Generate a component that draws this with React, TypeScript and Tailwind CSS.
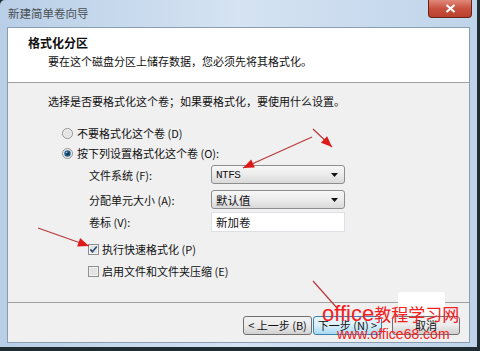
import React from 'react';

// 新建简单卷向导 - 格式化分区 页面

const Radio = ({ checked = false }: { checked?: boolean }) => (
  <svg width="11" height="11" viewBox="0 0 11 11" className="shrink-0">
    <circle cx="5.5" cy="5.5" r="5" fill="#f3f3f3" stroke="#8e8f8f" />
    <circle cx="5.5" cy="5.5" r="3.6" fill="#e4e4e4" />
    {checked && (
      <>
        <circle cx="5.5" cy="5.5" r="3.2" fill="#1f5d8c" />
        <circle cx="5.5" cy="5.5" r="1.6" fill="#0e2f4a" />
        <circle cx="4.6" cy="4.4" r="0.9" fill="#8fc3e8" />
      </>
    )}
  </svg>
);

const Check = ({ checked = false }: { checked?: boolean }) => (
  <svg width="11" height="11" viewBox="0 0 11 11" className="shrink-0">
    <rect x="0.5" y="0.5" width="10" height="10" fill="#f2f2f2" stroke="#8e8f8f" />
    <rect x="2" y="2" width="7" height="7" fill="#e3e3e3" />
    {checked && <path d="M2.3 5.4 L4.4 7.8 L8.8 2.6" fill="none" stroke="#2a4a78" strokeWidth="1.6" />}
  </svg>
);

const Combo = ({ value, mono }: { value: string; mono?: boolean }) => (
  <div className="w-[134px] h-[19px] flex items-center justify-between rounded-[3px] border border-[#8d8d8d] bg-gradient-to-b from-[#f7f7f7] via-[#ececec] to-[#d9d9d9] pl-[4px] pr-[6px]">
    <span className={mono ? "font-['Liberation_Mono',monospace] text-[11px] tracking-[-0.5px]" : 'text-[11.5px]'}>{value}</span>
    <svg width="7" height="4" viewBox="0 0 7 4">
      <path d="M0 0h7L3.5 4z" fill="#111" />
    </svg>
  </div>
);

const Btn = ({ label, primary, w }: { label: string; primary?: boolean; w: string }) => (
  <div
    className={`${w} h-[19px] flex items-center justify-center rounded-[3px] border text-[11px] ${
      primary
        ? 'border-[#3c7fb1] bg-gradient-to-b from-[#eaf6fd] via-[#d9f0fc] to-[#a7d9f5]'
        : 'border-[#707070] bg-gradient-to-b from-[#f2f2f2] via-[#ebebeb] to-[#d0d0d0]'
    }`}
  >
    {label}
  </div>
);

const head = (x1: number, y1: number, x2: number, y2: number, len = 11, w = 4.5) => {
  const dx = x2 - x1;
  const dy = y2 - y1;
  const d = Math.hypot(dx, dy);
  const ux = dx / d;
  const uy = dy / d;
  const bx = x2 - ux * len;
  const by = y2 - uy * len;
  return `${x2},${y2} ${bx - uy * w},${by + ux * w} ${bx + uy * w},${by - ux * w}`;
};

const arrows = [
  [313, 129, 332, 147, true],
  [312, 137, 243, 168, true],
  [38, 228, 89, 246, true],
  [313, 281, 337, 308, false],
] as const;

export default function App() {
  return (
    <div className="relative w-[480px] h-[351px] overflow-hidden bg-[#1f2c32] font-['Noto_Sans_CJK_SC',sans-serif] text-[#111]">
      {/* 窗口 */}
      <div className="w-[477px] h-[347px] flex flex-col rounded-tl-[5px] bg-gradient-to-r from-[#b9cfe7] via-[#d5e3f2] to-[#bfd4ea] px-[7px] pb-[4px]">
        {/* 标题栏 */}
        <div className="h-[27px] flex items-start justify-between shrink-0">
          <span className="mt-[6px] ml-[1px] text-[11.5px] leading-[15px] text-[#4a4f55]">新建简单卷向导</span>
          <div className="mr-[-2px] w-[44px] h-[18px] flex items-center justify-center rounded-b-[4px] border border-t-0 border-[#6b2219] bg-gradient-to-b from-[#e0897b] via-[#c9513f] to-[#b8402d]">
            <svg width="11" height="9" viewBox="0 0 11 9">
              <path d="M1.5 1 L9.5 8 M9.5 1 L1.5 8" stroke="#fff" strokeWidth="2.2" />
            </svg>
          </div>
        </div>

        {/* 客户区 */}
        <div className="flex-1 flex flex-col border border-[#8b9db2] bg-[#f0f0f0]">
          {/* 页眉 */}
          <div className="h-[55px] shrink-0 bg-white border-b border-[#a0a0a0] pl-[20px] pt-[8px]">
            <div className="text-[12px] leading-[14px] font-bold">格式化分区</div>
            <div className="mt-[4px] ml-[20px] text-[11px] leading-[14px]">要在这个磁盘分区上储存数据，您必须先将其格式化。</div>
          </div>

          {/* 主体 */}
          <div className="flex-1 flex flex-col pl-[40px] pt-[11px] text-[11px] leading-[14px]">
            <div>选择是否要格式化这个卷；如果要格式化，要使用什么设置。</div>

            <div className="mt-[18px] ml-[14px] flex items-center gap-[4px]">
              <Radio />
              <span>不要格式化这个卷 (D)</span>
            </div>
            <div className="mt-[6px] ml-[14px] flex items-center gap-[4px]">
              <Radio checked />
              <span>按下列设置格式化这个卷 (O):</span>
            </div>

            <div className="mt-[5px] ml-[41px] flex items-center">
              <span className="w-[122px]">文件系统 (F):</span>
              <Combo value="NTFS" mono />
            </div>
            <div className="mt-[6px] ml-[41px] flex items-center">
              <span className="w-[122px]">分配单元大小 (A):</span>
              <Combo value="默认值" />
            </div>
            <div className="mt-[3px] ml-[41px] flex items-center">
              <span className="w-[122px]">卷标 (V):</span>
              <div className="w-[134px] h-[20px] flex items-center bg-white border border-[#dcdfe4] pl-[4px] text-[11.5px]">新加卷</div>
            </div>

            <div className="mt-[10px] ml-[40px] flex items-center gap-[3px]">
              <Check checked />
              <span>执行快速格式化 (P)</span>
            </div>
            <div className="mt-[8px] ml-[40px] flex items-center gap-[3px]">
              <Check />
              <span>启用文件和文件夹压缩 (E)</span>
            </div>
          </div>

          {/* 按钮 */}
          <div className="h-[40px] shrink-0 border-t border-[#a0a0a0] flex justify-end items-start pt-[13px] pr-[9px]">
            <Btn label="< 上一步 (B)" w="w-[69px]" />
            <div className="ml-[1px]">
              <Btn label="下一步 (N) >" w="w-[69px]" primary />
            </div>
            <div className="ml-[10px]">
              <Btn label="取消" w="w-[68px]" />
            </div>
          </div>
        </div>
      </div>

      {/* 标注箭头 */}
      <svg className="absolute left-0 top-0 pointer-events-none" width="480" height="351">
        {arrows.map(([x1, y1, x2, y2, h], i) => (
          <g key={i}>
            <line x1={x1} y1={y1} x2={x2} y2={y2} stroke="#b8393b" strokeWidth="1.2" />
            {h && <polygon points={head(x1, y1, x2, y2)} fill="#dd1a1a" />}
          </g>
        ))}
      </svg>

      {/* 水印 */}
      <div className="absolute left-[398px] top-[292px] w-[47px] h-[23px] rounded-[3px] bg-white" />
      <div className="absolute left-[322px] top-[302px] flex items-baseline text-[#f5201e] leading-[24px]">
        <span className="font-['Liberation_Sans',sans-serif] text-[22px]">office</span>
        <span className="text-[17px]">教程学习网</span>
      </div>
      <div className="absolute left-[337px] top-[326px] font-['Liberation_Sans',sans-serif] text-[14px] leading-[16px] text-[#f5201e]">
        www.office68.com
      </div>
    </div>
  );
}
